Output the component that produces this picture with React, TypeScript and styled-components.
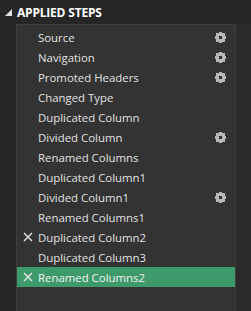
import React from "react";
import styled, { createGlobalStyle } from "styled-components";

const Global = createGlobalStyle`
  html, body { margin: 0; padding: 0; background: #262626; }
  body { font-family: "Open Sans", "Segoe UI", sans-serif; }
`;

const Page = styled.div`
  width: 251px;
  height: 311px;
  background: #262626;
  display: flex;
  flex-direction: column;
  overflow: hidden;
`;

const Header = styled.div`
  height: 24px;
  display: flex;
  align-items: center;
  padding-left: 5px;
  gap: 5px;
  color: #ffffff;
  font-weight: 700;
  font-size: 12px;
  letter-spacing: -0.2px;
`;

const Body = styled.div`
  flex: 1;
  display: flex;
  padding-left: 16px;
`;

const Panel = styled.div`
  width: 218px;
  background: #333333;
  border: 1px solid #3e3e3e;
  border-bottom: none;
  padding-top: 2px;
  display: flex;
  flex-direction: column;
`;

const RightStrip = styled.div`
  flex: 1;
  background: #2b2b2b;
`;

const Row = styled.div<{ $selected?: boolean }>`
  height: 20px;
  display: flex;
  align-items: center;
  background: ${(p) => (p.$selected ? "#3e9a6a" : "transparent")};
  color: ${(p) => (p.$selected ? "#f2f2f2" : "#e2e2e2")};
  font-size: 11.4px;
`;

const IconSlot = styled.div`
  width: 21px;
  display: flex;
  justify-content: center;
  align-items: center;
`;

const Label = styled.div`
  flex: 1;
  white-space: nowrap;
`;

const GearSlot = styled.div`
  width: 20px;
  display: flex;
  align-items: center;
  justify-content: flex-start;
`;

const Gear = () => (
  <svg width="11" height="11" viewBox="0 0 11 11">
    <g fill="#b8b8b8">
      <rect x="4" y="0" width="3" height="11" />
      <rect x="0" y="4" width="11" height="3" />
      <rect x="1" y="1" width="3" height="3" />
      <rect x="7" y="1" width="3" height="3" />
      <rect x="1" y="7" width="3" height="3" />
      <rect x="7" y="7" width="3" height="3" />
      <rect x="2" y="2" width="7" height="7" />
    </g>
    <rect x="4" y="4" width="3" height="3" fill="#333333" />
  </svg>
);

const XIcon = () => (
  <svg width="10" height="10" viewBox="0 0 10 10">
    <path d="M1 1 L9 9 M9 1 L1 9" stroke="#e6e6e6" strokeWidth="1.4" />
  </svg>
);

const Triangle = () => (
  <svg width="7" height="7" viewBox="0 0 7 7">
    <path d="M7 0 L7 7 L0 7 Z" fill="#e0e0e0" />
  </svg>
);

type Step = { name: string; gear?: boolean; error?: boolean; selected?: boolean };

const steps: Step[] = [
  { name: "Source", gear: true },
  { name: "Navigation", gear: true },
  { name: "Promoted Headers", gear: true },
  { name: "Changed Type" },
  { name: "Duplicated Column" },
  { name: "Divided Column", gear: true },
  { name: "Renamed Columns" },
  { name: "Duplicated Column1" },
  { name: "Divided Column1", gear: true },
  { name: "Renamed Columns1" },
  { name: "Duplicated Column2", error: true },
  { name: "Duplicated Column3" },
  { name: "Renamed Columns2", error: true, selected: true },
];

export default function App() {
  return (
    <Page>
      <Global />
      <Header>
        <Triangle />
        <span>APPLIED STEPS</span>
      </Header>
      <Body>
        <Panel>
          {steps.map((s) => (
            <Row key={s.name} $selected={s.selected}>
              <IconSlot>{s.error ? <XIcon /> : null}</IconSlot>
              <Label>{s.name}</Label>
              <GearSlot>{s.gear ? <Gear /> : null}</GearSlot>
            </Row>
          ))}
        </Panel>
        <RightStrip />
      </Body>
    </Page>
  );
}
